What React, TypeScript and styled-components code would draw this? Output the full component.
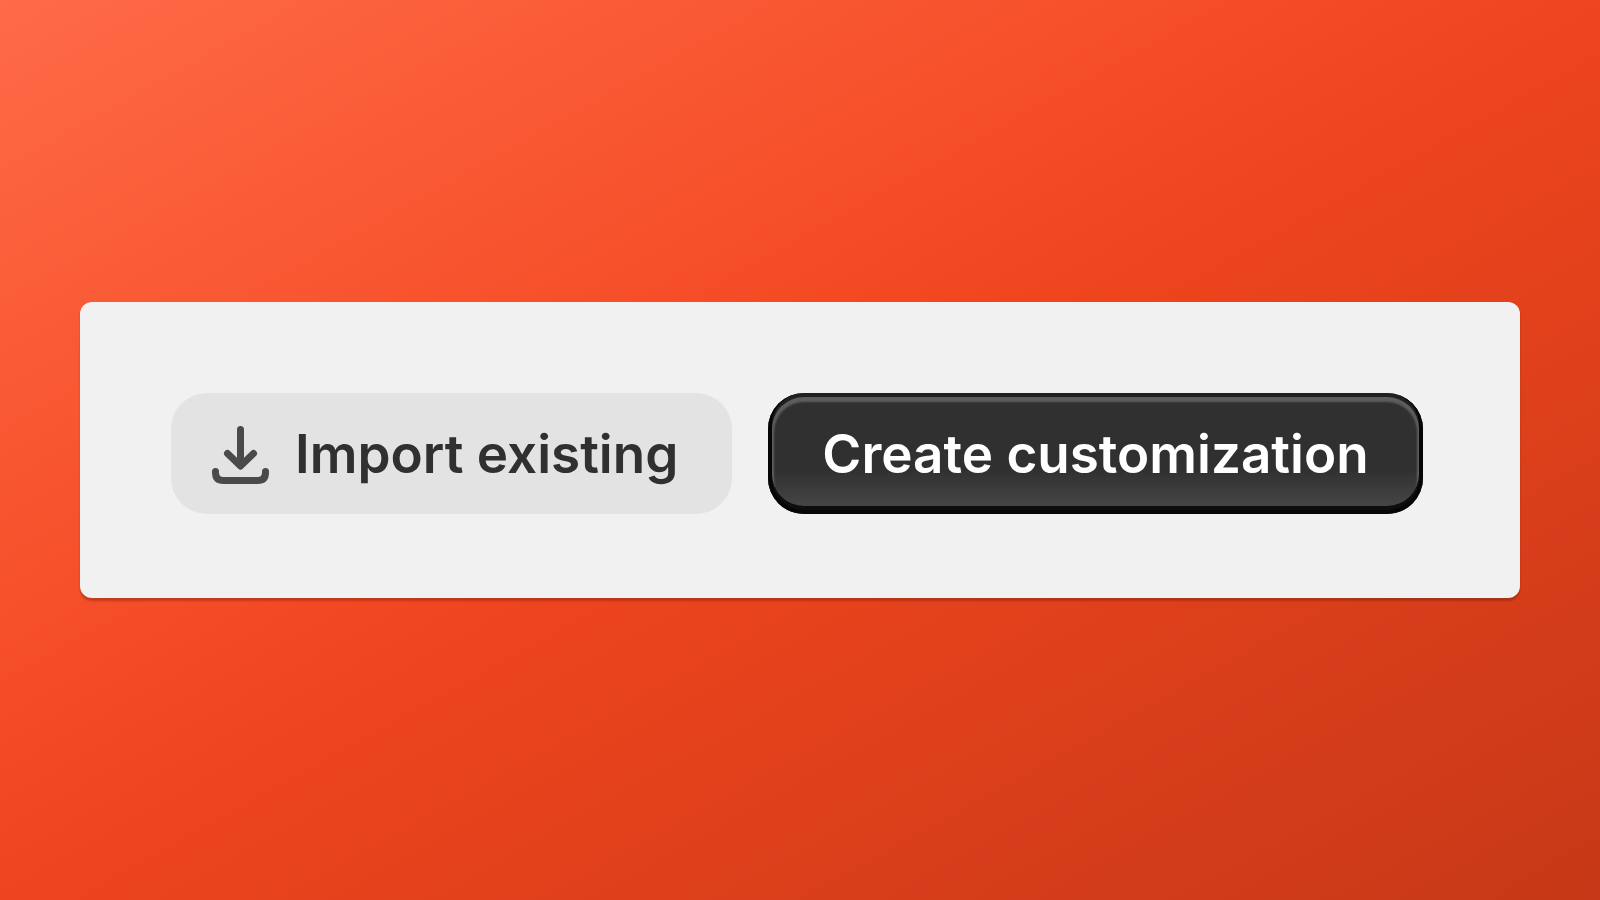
import React from "react";
import styled, { createGlobalStyle } from "styled-components";

const GlobalStyle = createGlobalStyle`
  *, *::before, *::after { box-sizing: border-box; }
  body { margin: 0; font-family: Inter, "Liberation Sans", sans-serif; }
`;

const Stage = styled.main`
  min-height: 100vh;
  display: flex;
  align-items: center;
  padding: 0 5%;
  background: linear-gradient(151deg, #ff6a47 0%, #f34922 44%, #ee451e 50%, #c63817 100%);
`;

const Panel = styled.section`
  flex: 1;
  display: flex;
  gap: 36px;
  padding: 91px 91px 84px;
  border-radius: 12px;
  background: #f1f1f1;
  box-shadow: 0 3px 2px rgba(80, 20, 5, 0.3);
`;

const Button = styled.button<{ $primary?: boolean }>`
  display: flex;
  align-items: center;
  justify-content: center;
  gap: 24px;
  height: 121px;
  padding: ${(p) => (p.$primary ? "1px 54px 0" : "1px 54px 0 40px")};
  border: 0;
  border-radius: 36px;
  font: 600 53px/64px Inter, "Liberation Sans", sans-serif;
  white-space: nowrap;
  color: ${(p) => (p.$primary ? "#ffffff" : "#303030")};
  background: ${(p) =>
    p.$primary ? "linear-gradient(#303030 63%, #4a4a4a 100%)" : "#e3e3e3"};
  box-shadow: ${(p) =>
    p.$primary
      ? "inset 0 -4px 0 4px rgba(0, 0, 0, 0.8), inset 0 0 0 4px #202020, inset 0 3px 2px 6px rgba(255, 255, 255, 0.22)"
      : "none"};
`;

const Icon = styled.svg`
  width: 60px;
  height: 60px;
  fill: none;
  stroke: #4a4a4a;
  stroke-width: 7;
  stroke-linecap: round;
  stroke-linejoin: round;
`;

export default function App() {
  return (
    <>
      <GlobalStyle />
      <Stage>
        <Panel>
          <Button type="button">
            <Icon viewBox="0 0 60 60" aria-hidden="true">
              <path d="M29.5 5.5v36M16.5 29.5l13 12.5 13-12.5M4.5 47.5v1q0 8 8 8h34q8 0 8-8v-1" />
            </Icon>
            Import existing
          </Button>
          <Button type="button" $primary>Create customization</Button>
        </Panel>
      </Stage>
    </>
  );
}
